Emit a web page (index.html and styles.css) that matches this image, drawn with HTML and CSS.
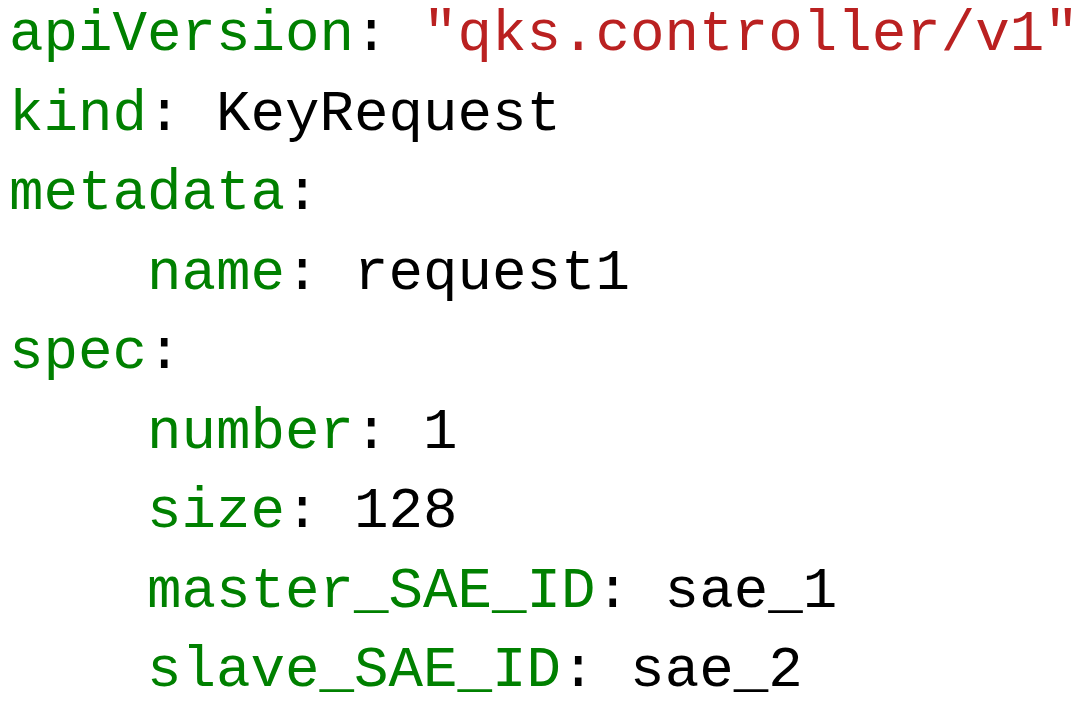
FILE: index.html
```html
<!DOCTYPE html>
<html>
<head>
<meta charset="utf-8">
<link rel="stylesheet" href="styles.css">
</head>
<body>
<pre class="code"><span class="k">apiVersion</span>: <span class="s">"qks.controller/v1"</span>
<span class="k">kind</span>: KeyRequest
<span class="k">metadata</span>:
    <span class="k">name</span>: request1
<span class="k">spec</span>:
    <span class="k">number</span>: 1
    <span class="k">size</span>: 128
    <span class="k">master_SAE_ID</span>: sae_1
    <span class="k">slave_SAE_ID</span>: sae_2</pre>
</body>
</html>
```
FILE: styles.css
```css
html, body {
  margin: 0;
  padding: 0;
  background: #ffffff;
}
.code {
  margin: -5px 0 0 0;
  padding: 0 0 0 9px;
  font-family: "Liberation Mono", "DejaVu Sans Mono", monospace;
  font-size: 57.5px;
  line-height: 79.5px;
  color: #000000;
  white-space: pre;
}
.k {
  color: #008000;
}
.s {
  color: #ba2121;
}
```
